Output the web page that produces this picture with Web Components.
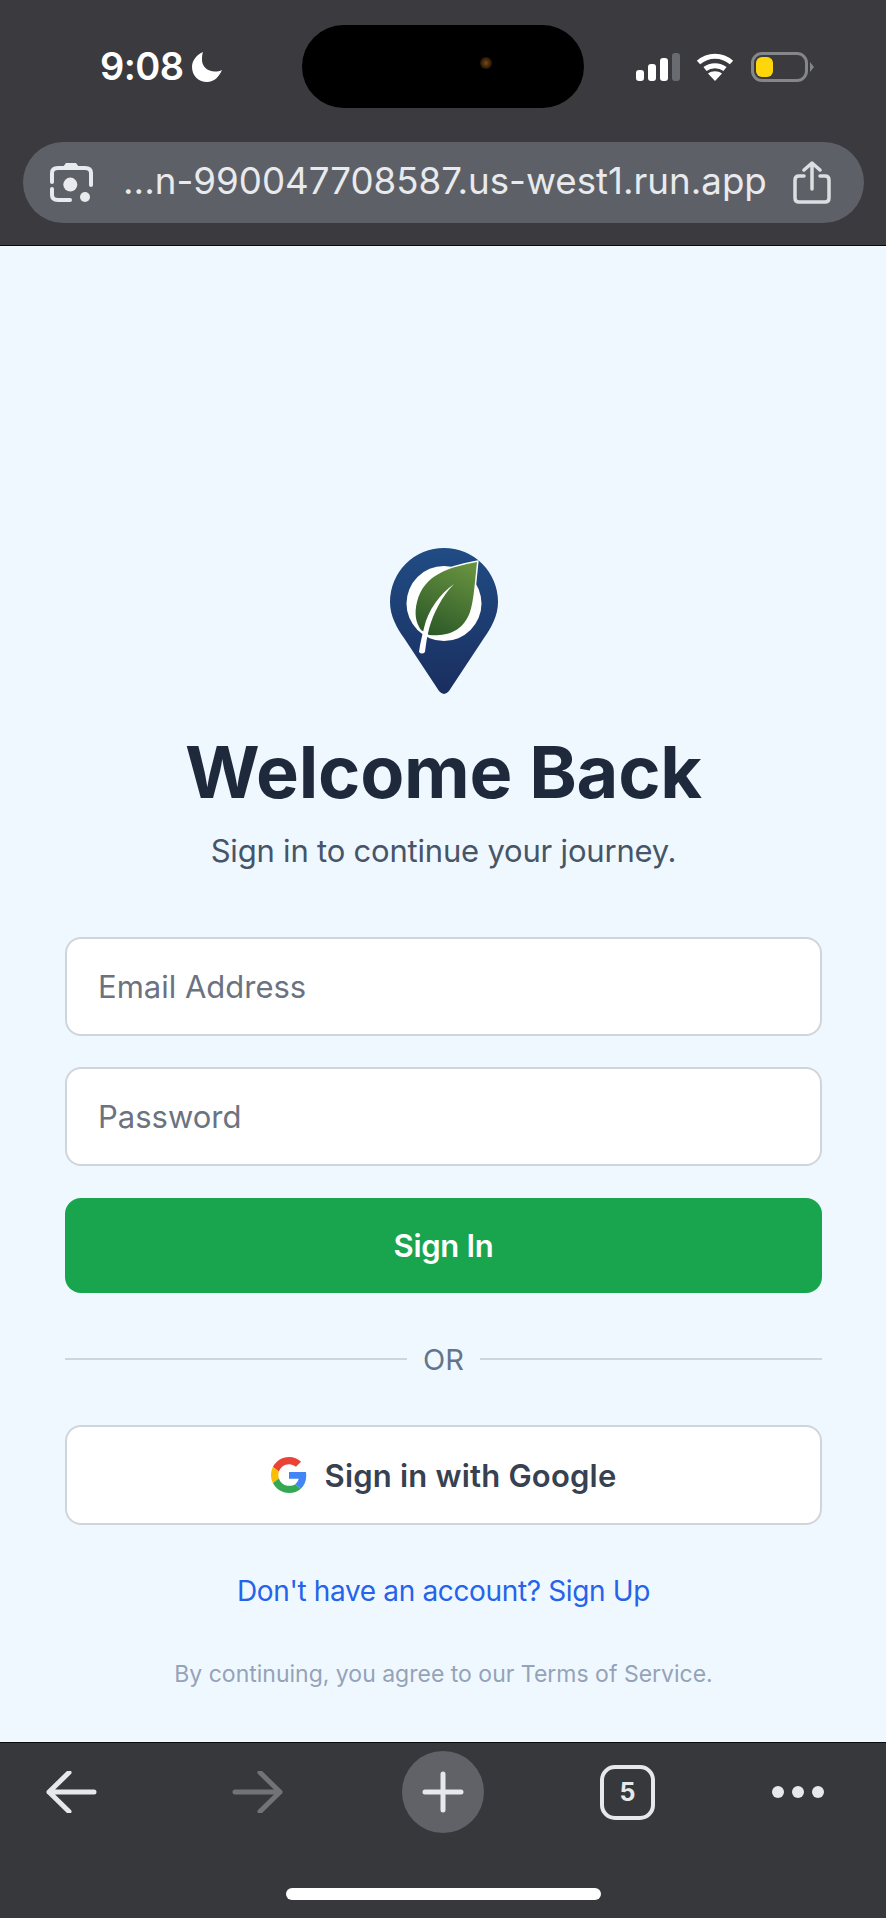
<!DOCTYPE html>
<html lang="en">
<head>
<meta charset="utf-8">
<title>Welcome Back</title>
<style>
  html, body { margin: 0; background: #f0f8ff; }
  body { font-family: Inter, "Liberation Sans", sans-serif; }
  phone-shell { width: 886px; height: 1918px; }
</style>
</head>
<body>
<phone-shell>
  <browser-top slot="top"></browser-top>
  <login-page></login-page>
  <browser-bottom slot="bottom"></browser-bottom>
</phone-shell>

<script>
class PhoneShell extends HTMLElement {
  constructor() {
    super();
    this.attachShadow({ mode: 'open' });
    this.shadowRoot.innerHTML = `
      <style>
        :host { display: flex; flex-direction: column; overflow: hidden; background: #f0f8ff; }
        .main { flex: 1; min-height: 0; display: block; }
      </style>
      <slot name="top"></slot>
      <div class="main"><slot></slot></div>
      <slot name="bottom"></slot>
    `;
  }
}

class BrowserTop extends HTMLElement {
  constructor() {
    super();
    this.attachShadow({ mode: 'open' });
    this.shadowRoot.innerHTML = `
      <style>
        :host {
          display: block;
          height: 246px;
          box-sizing: border-box;
          background: #3a3a3f;
          border-bottom: 1px solid #0c0c0e;
          font-family: Inter, "Liberation Sans", sans-serif;
        }
        .status { display: flex; align-items: center; height: 83px; padding: 25px 0 0 100px; }
        .time { width: 84px; font-size: 38px; font-weight: 600; letter-spacing: -0.6px; color: #fff; line-height: 83px; white-space: nowrap; }
        .moon { margin-left: 8px; width: 30px; height: 30px; margin-top: 1px; }
        .island { position: relative; margin-left: 80px; width: 282px; height: 83px; border-radius: 42px; background: #000; }
        .island i { position: absolute; left: 178px; top: 32px; width: 12px; height: 12px; border-radius: 50%; background: radial-gradient(circle, #7a4a14 0, #3a230a 50%, #000 100%); }
        .signal { display: flex; align-items: flex-end; gap: 4px; margin-left: 52px; height: 28px; }
        .signal b { width: 8px; border-radius: 3px; background: #fff; }
        .wifi { margin-left: 16px; width: 38px; height: 29px; }
        .battery { display: flex; align-items: center; margin-left: 17px; }
        .cell { width: 57px; height: 30px; box-sizing: border-box; border: 3px solid #85868a; border-radius: 11px; padding: 2px; }
        .cell b { display: block; width: 17px; height: 100%; border-radius: 6px; background: #ffd60a; }
        .nub { width: 0; height: 0; margin-left: 2px; border-left: 4px solid #85868a; border-top: 5px solid transparent; border-bottom: 5px solid transparent; }
        .url {
          display: flex; align-items: center;
          height: 81px; margin: 34px 22px 0 23px; padding: 0 33px 0 27px;
          border-radius: 41px; background: #5d6066; color: #e8eaed;
        }
        .url svg { flex: none; }
        .addr { flex: 1; margin: 0 0 3px 29px; font-size: 36.7px; line-height: 78px; white-space: nowrap; }
      </style>
      <div class="status">
        <span class="time">9:08</span>
        <svg class="moon" viewBox="0 0 30 30"><path fill="#fff" d="M11 0 C4 3 0 9 0 15 C0 24 7 30 15 30 C22 30 27 25 30 18 C28 19 25 19.500 23 19.500 C15 19.500 10 14 10 8 C10 5 10 3 11 0Z"/></svg>
        <div class="island"><i></i></div>
        <div class="signal">
          <b style="height:11px"></b><b style="height:17px"></b><b style="height:23px"></b><b style="height:28px;background:#6a6b70"></b>
        </div>
        <svg class="wifi" viewBox="0 0 38 29" fill="none" stroke="#fff" stroke-width="5">
          <path d="M2.500 10.500 C12 2 26 2 35.500 10.500"/>
          <path d="M9 17 C14.500 12.500 23.500 12.500 29 17"/>
          <path fill="#fff" stroke="none" d="M19 29 L12 21.500 C16 18.500 22 18.500 26 21.500Z"/>
        </svg>
        <div class="battery"><div class="cell"><b></b></div><div class="nub"></div></div>
      </div>
      <div class="url">
        <svg width="44" height="42" viewBox="0 0 44 42" fill="none" stroke="#e8eaed" stroke-width="4" stroke-linecap="round">
          <path d="M2 20 V11 Q2 6 8 6 H35 Q41 6 41 11 V23"/>
          <path d="M2 27 V33 Q2 38 8 38 H20"/>
          <path fill="#e8eaed" stroke="none" d="M13 5 L16 1 H26 L29 5Z"/>
          <circle cx="20.300" cy="22.600" r="7" fill="#e8eaed" stroke="none"/>
          <circle cx="35" cy="35" r="5" fill="#e8eaed" stroke="none"/>
        </svg>
        <span class="addr">...n-990047708587.us-west1.run.app</span>
        <svg width="38" height="43" viewBox="0 0 38 43" fill="none" stroke="#dcdee1" stroke-width="3.500" stroke-linecap="round" stroke-linejoin="round">
          <path d="M11 15 H6 Q2 15 2 19 V37 Q2 41 6 41 H32 Q36 41 36 37 V19 Q36 15 32 15 H27"/>
          <path d="M19 28 V2 M11 9 L19 2 L27 9"/>
        </svg>
      </div>
    `;
  }
}

class BrowserBottom extends HTMLElement {
  constructor() {
    super();
    this.attachShadow({ mode: 'open' });
    this.shadowRoot.innerHTML = `
      <style>
        :host {
          display: block;
          height: 176px;
          box-sizing: border-box;
          background: #36383c;
          border-top: 1px solid #0c0c0e;
          font-family: Inter, "Liberation Sans", sans-serif;
        }
        .tools { display: flex; align-items: center; height: 82px; margin-top: 8px; padding-left: 46px; }
        .tools > * { flex: none; }
        .plus { display: flex; align-items: center; justify-content: center; width: 82px; height: 82px; margin-left: 119px; border-radius: 50%; background: #606267; }
        .tabs {
          display: flex; align-items: center; justify-content: center;
          width: 55px; height: 55px; box-sizing: border-box; margin-left: 116px;
          border: 4px solid #e6e8ec; border-radius: 15px;
          color: #e6e8ec; font-size: 25px; font-weight: 700;
        }
        .dots { display: flex; gap: 8px; margin-left: 117px; }
        .dots i { width: 12px; height: 12px; border-radius: 50%; background: #e6e8ec; }
        .home { width: 315px; height: 12px; margin: 55px auto 0; border-radius: 6px; background: #fff; }
      </style>
      <div class="tools">
        <svg width="51" height="42" viewBox="0 0 51 42" fill="none" stroke="#e6e8ec" stroke-width="5" stroke-linecap="round" stroke-linejoin="round"><path d="M48 21 H3 M23 1.500 L3 21 L23 40.500"/></svg>
        <svg style="margin-left:135px" width="51" height="42" viewBox="0 0 51 42" fill="none" stroke="#717377" stroke-width="5" stroke-linecap="round" stroke-linejoin="round"><path d="M3 21 H48 M28 1.500 L48 21 L28 40.500"/></svg>
        <div class="plus"><svg width="42" height="42" viewBox="0 0 42 42" stroke="#e6e8ec" stroke-width="5" stroke-linecap="round"><path d="M3 21 H39 M21 3 V39"/></svg></div>
        <div class="tabs">5</div>
        <div class="dots"><i></i><i></i><i></i></div>
      </div>
      <div class="home"></div>
    `;
  }
}

class BrandLogo extends HTMLElement {
  constructor() {
    super();
    this.attachShadow({ mode: 'open' });
    this.shadowRoot.innerHTML = `
      <style>:host { display: block; width: 108px; height: 147px; } svg { display: block; }</style>
      <svg width="108" height="147" viewBox="26 18 108 147">
        <defs>
          <linearGradient id="pin" x1="0" y1="0" x2="0" y2="1">
            <stop offset="0" stop-color="#204c84"/><stop offset="1" stop-color="#1a2e5f"/>
          </linearGradient>
          <linearGradient id="leaf" x1="0.7" y1="0" x2="0.3" y2="1">
            <stop offset="0" stop-color="#66913f"/><stop offset="1" stop-color="#2d5a28"/>
          </linearGradient>
        </defs>
        <path fill="url(#pin)" d="M80 18 A54 54 0 0 1 134 72 C134 86 127 98 120 108 L85 161 Q80 167 75 161 L40 108 C33 98 26 86 26 72 A54 54 0 0 1 80 18Z"/>
        <circle cx="80" cy="73.500" r="37.500" fill="#fff"/>
        <path fill="url(#leaf)" stroke="#fff" stroke-width="3" paint-order="stroke" d="M113 32 C86 37 60 44 53 72 C50 84 52 93 57 100 L65 105 C80 106 98 104 106 82 C110 70 111 50 113 32Z"/>
        <path fill="#fff" d="M90 54 C76 64 64 80 60 98 C58 106 56 114 55 122 Q58 125 61 122 C62 114 63 106 65 99 C69 84 78 66 90 54Z"/>
      </svg>
    `;
  }
}

class TextField extends HTMLElement {
  constructor() {
    super();
    this.attachShadow({ mode: 'open' });
    this.shadowRoot.innerHTML = `
      <style>
        :host {
          display: flex; align-items: center;
          height: 99px; box-sizing: border-box; padding: 0 31px;
          background: #fff; border: 2px solid #d0d5dc; border-radius: 16px;
          color: #6b7280; font-size: 31px;
        }
      </style>
      <slot></slot>
    `;
  }
}

class ActionButton extends HTMLElement {
  constructor() {
    super();
    this.attachShadow({ mode: 'open' });
    this.shadowRoot.innerHTML = `
      <style>
        :host {
          display: flex; align-items: center; justify-content: center; gap: 18px;
          box-sizing: border-box; border-radius: 16px; font-size: 31px; font-weight: 600;
        }
        :host([variant="primary"]) { height: 95px; background: #19a54e; color: #fff; letter-spacing: -0.3px; }
        :host([variant="outline"]) { height: 100px; background: #fff; color: #374151; border: 2px solid #d0d5dc; letter-spacing: 0.2px; }
      </style>
      <slot name="icon"></slot><slot></slot>
    `;
  }
}

class OrDivider extends HTMLElement {
  constructor() {
    super();
    this.attachShadow({ mode: 'open' });
    this.shadowRoot.innerHTML = `
      <style>
        :host { display: flex; align-items: center; gap: 16px; color: #64748b; font-size: 29px; }
        i { flex: 1; height: 2px; background: #d0d5dc; }
      </style>
      <i></i><slot></slot><i></i>
    `;
  }
}

class LoginPage extends HTMLElement {
  constructor() {
    super();
    this.attachShadow({ mode: 'open' });
    this.shadowRoot.innerHTML = `
      <style>
        :host {
          display: flex; flex-direction: column; align-items: center;
          box-sizing: border-box; height: 100%; padding: 302px 64px 0 65px;
          background: #f0f8ff;
          font-family: Inter, "Liberation Sans", sans-serif;
        }
        h1 { margin: 35px 0 0; font-size: 72px; line-height: 84px; font-weight: 700; letter-spacing: -0.2px; color: #1e293b; white-space: nowrap; }
        .sub { margin: 17px 0 0; font-size: 31px; line-height: 40px; color: #475569; letter-spacing: -0.2px; }
        form { display: flex; flex-direction: column; width: 100%; margin-top: 66px; }
        text-field + text-field { margin-top: 31px; }
        .signin { margin-top: 32px; }
        or-divider { margin-top: 49px; height: 34px; }
        .google { margin-top: 49px; }
        .link { margin: 46px 0 0; font-size: 28px; line-height: 40px; color: #2563eb; letter-spacing: -0.35px; }
        .terms { margin: 46px 0 0; font-size: 23px; line-height: 34px; color: #94a3b8; }
      </style>
      <brand-logo></brand-logo>
      <h1>Welcome Back</h1>
      <p class="sub">Sign in to continue your journey.</p>
      <form>
        <text-field>Email Address</text-field>
        <text-field>Password</text-field>
        <action-button class="signin" variant="primary">Sign In</action-button>
        <or-divider>OR</or-divider>
        <action-button class="google" variant="outline">
          <svg slot="icon" width="36" height="36" viewBox="0 0 48 48" style="display:block">
            <path fill="#EA4335" d="M24 9.5c3.54 0 6.71 1.22 9.21 3.6l6.85-6.85C35.9 2.38 30.47 0 24 0 14.62 0 6.51 5.38 2.56 13.22l7.98 6.19C12.43 13.72 17.74 9.5 24 9.5z"/>
            <path fill="#4285F4" d="M46.98 24.55c0-1.57-.15-3.09-.38-4.55H24v9.02h12.94c-.58 2.96-2.26 5.48-4.78 7.18l7.73 6c4.51-4.18 7.09-10.36 7.09-17.65z"/>
            <path fill="#FBBC05" d="M10.53 28.59c-.48-1.45-.76-2.99-.76-4.59s.27-3.14.76-4.59l-7.98-6.19C.92 16.46 0 20.12 0 24c0 3.88.92 7.54 2.56 10.78l7.97-6.19z"/>
            <path fill="#34A853" d="M24 48c6.48 0 11.93-2.13 15.89-5.81l-7.73-6c-2.15 1.45-4.92 2.3-8.16 2.3-6.26 0-11.57-4.22-13.47-9.91l-7.98 6.19C6.51 42.62 14.62 48 24 48z"/>
          </svg>
          Sign in with Google
        </action-button>
      </form>
      <p class="link">Don't have an account? Sign Up</p>
      <p class="terms">By continuing, you agree to our Terms of Service.</p>
    `;
  }
}

customElements.define('phone-shell', PhoneShell);
customElements.define('browser-top', BrowserTop);
customElements.define('browser-bottom', BrowserBottom);
customElements.define('brand-logo', BrandLogo);
customElements.define('text-field', TextField);
customElements.define('action-button', ActionButton);
customElements.define('or-divider', OrDivider);
customElements.define('login-page', LoginPage);
</script>
</body>
</html>
